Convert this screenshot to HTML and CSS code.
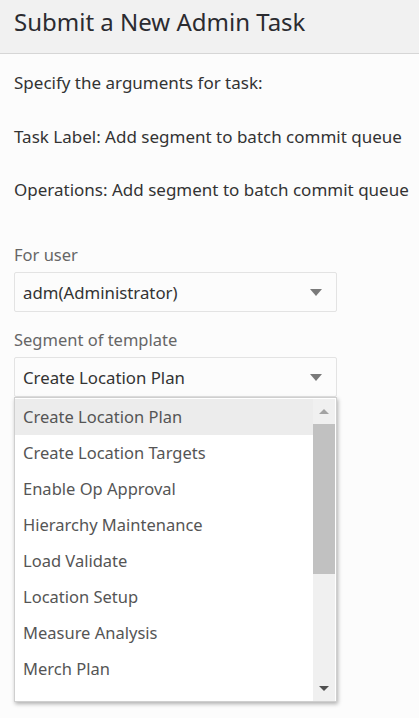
FILE: index.html
```html
<!DOCTYPE html>
<html>
<head>
<meta charset="utf-8">
<link rel="stylesheet" href="styles.css">
</head>
<body>
<header class="header"><h1 class="title">Submit a New Admin Task</h1></header>
<main class="content">
  <p class="para">Specify the arguments for task:</p>
  <p class="para">Task Label: Add segment to batch commit queue</p>
  <p class="para">Operations: Add segment to batch commit queue</p>

  <div class="field field-first">
    <div class="label">For user</div>
    <div class="select">
      <span class="select-text">adm(Administrator)</span>
      <svg class="caret" width="12" height="7" viewBox="0 0 12 7"><path d="M0 0H12L6 7Z" fill="#7a7a7a"/></svg>
    </div>
  </div>

  <div class="field">
    <div class="label">Segment of template</div>
    <div class="select-wrap">
      <div class="select">
        <span class="select-text">Create Location Plan</span>
        <svg class="caret" width="12" height="7" viewBox="0 0 12 7"><path d="M0 0H12L6 7Z" fill="#7a7a7a"/></svg>
      </div>
      <div class="dropdown">
        <ul class="options">
          <li class="option option-active">Create Location Plan</li>
          <li class="option">Create Location Targets</li>
          <li class="option">Enable Op Approval</li>
          <li class="option">Hierarchy Maintenance</li>
          <li class="option">Load Validate</li>
          <li class="option">Location Setup</li>
          <li class="option">Measure Analysis</li>
          <li class="option">Merch Plan</li>
        </ul>
        <div class="scrollbar">
          <div class="sb-btn"><svg width="10" height="5" viewBox="0 0 10 5"><path d="M0 5H10L5 0Z" fill="#a3a3a3"/></svg></div>
          <div class="sb-track"><div class="sb-thumb"></div></div>
          <div class="sb-btn"><svg width="10" height="5" viewBox="0 0 10 5"><path d="M0 0H10L5 5Z" fill="#505050"/></svg></div>
        </div>
      </div>
    </div>
  </div>
</main>
</body>
</html>
```

FILE: styles.css
```css
* { box-sizing: border-box; }
html, body {
  margin: 0;
  padding: 0;
  background: #fcfcfc;
  font-family: "Noto Sans", "Open Sans", sans-serif;
  color: #333;
}
body { min-height: 100vh; overflow: hidden; }
.header {
  height: 54px;
  background: #f1f1f1;
  border-bottom: 1px solid #d6d6d6;
  padding: 0 14px;
}
.title {
  margin: 0;
  font-weight: 400;
  font-size: 24px;
  line-height: 44px;
  color: #2b2b30;
}
.content {
  padding: 18px 14px 0;
}
.para {
  margin: 0 0 31.5px;
  font-size: 17px;
  line-height: 22px;
  color: #333;
  white-space: nowrap;
}
.field-first { margin-top: 43px; }
.field { margin-bottom: 17px; width: 323px; }
.label {
  font-size: 16.5px;
  line-height: 22px;
  color: #666;
  margin-bottom: 6px;
}
.select-wrap { position: relative; }
.select {
  height: 40px;
  border: 1px solid #e3e3e3;
  border-radius: 2px;
  background: #fcfcfc;
  display: flex;
  align-items: center;
  justify-content: space-between;
  padding: 0 14px 0 8px;
}
.select-text {
  font-size: 16.8px;
  color: #333;
}
.caret { display: block; margin-top: 1px; }
.dropdown {
  position: absolute;
  left: 0;
  top: 40px;
  width: 323px;
  height: 305px;
  background: #fff;
  border: 1px solid #cfcfcf;
  box-shadow: 1px 2px 4px rgba(0,0,0,0.3);
  display: flex;
  padding-top: 1px;
  overflow: hidden;
  z-index: 5;
}
.options {
  list-style: none;
  margin: 0;
  padding: 0;
  flex: 1;
}
.option {
  height: 36px;
  line-height: 36px;
  padding-left: 8px;
  font-size: 16.5px;
  color: #555;
}
.option-active { background: #ececec; }
.scrollbar {
  width: 22px;
  margin-right: 1px;
  background: #f0f0f0;
  display: flex;
  flex-direction: column;
}
.sb-btn {
  height: 25px;
  flex: none;
  display: flex;
  align-items: center;
  justify-content: center;
}
.sb-track { flex: 1; }
.sb-thumb {
  height: 150px;
  background: #c1c1c1;
}
```
